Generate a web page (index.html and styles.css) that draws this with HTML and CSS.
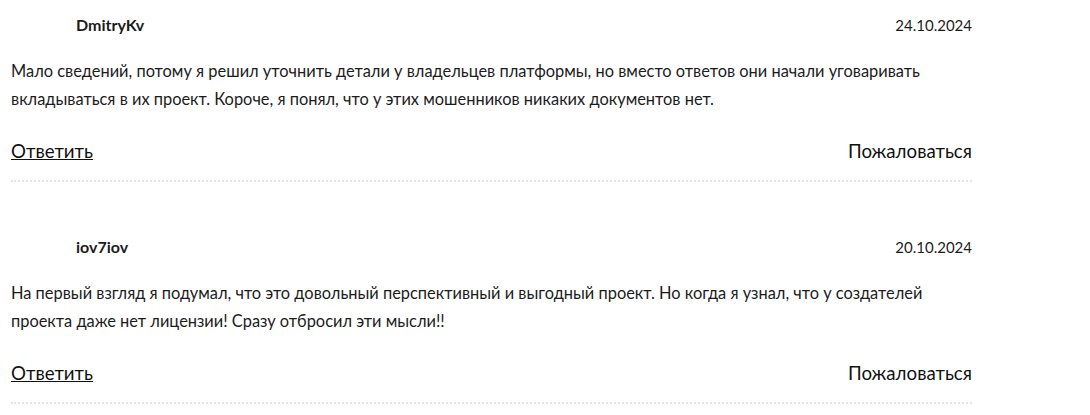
FILE: index.html
```html
<!DOCTYPE html>
<html lang="ru">
<head>
  <meta charset="UTF-8">
  <meta name="viewport" content="width=device-width, initial-scale=1.0">
  <title>Отзывы</title>
  <link rel="stylesheet" href="styles.css">
</head>
<body>
  <div class="comments">
    <div class="comment">
      <div class="comment-head">
        <span class="comment-author">DmitryKv</span>
        <span class="comment-date">24.10.2024</span>
      </div>
      <p class="comment-text">Мало сведений, потому я решил уточнить детали у владельцев платформы, но вместо ответов они начали уговаривать вкладываться в их проект. Короче, я понял, что у этих мошенников никаких документов нет.</p>
      <div class="comment-actions">
        <a href="#" class="reply-link">Ответить</a>
        <a href="#" class="complain-link">Пожаловаться</a>
      </div>
    </div>

    <div class="comment">
      <div class="comment-head">
        <span class="comment-author">iov7iov</span>
        <span class="comment-date">20.10.2024</span>
      </div>
      <p class="comment-text">На первый взгляд я подумал, что это довольный перспективный и выгодный проект. Но когда я узнал, что у создателей проекта даже нет лицензии! Сразу отбросил эти мысли!!</p>
      <div class="comment-actions">
        <a href="#" class="reply-link">Ответить</a>
        <a href="#" class="complain-link">Пожаловаться</a>
      </div>
    </div>
  </div>
</body>
</html>
```

FILE: styles.css
```css
/* comments list */
body, html {
  margin: 0;
  padding: 0;
  background: #fff;
}

body {
  font-family: Lato, "Open Sans", sans-serif;
  color: #1c1c1c;
}

.comments {
  width: 961px;
  margin-left: 11px;
}

.comment {
  padding-top: 15px;
  margin-bottom: 40px;
  border-bottom: 2px dotted #e6e6e6;
}

.comment-head {
  display: flex;
  justify-content: space-between;
  align-items: center;
  padding-left: 65px;
}

.comment-author {
  font-size: 16px;
  font-weight: 700;
}

.comment-date {
  font-size: 15px;
}

.comment-text {
  font-size: 16.4px;
  line-height: 28px;
  margin: 23px 0 0;
}

.comment-actions {
  display: flex;
  justify-content: space-between;
  margin-top: 25px;
  padding-bottom: 16px;
  font-size: 18.7px;
  line-height: 26px;
}

.comment-actions a {
  color: #111;
}

.complain-link {
  text-decoration: none;
}
```
